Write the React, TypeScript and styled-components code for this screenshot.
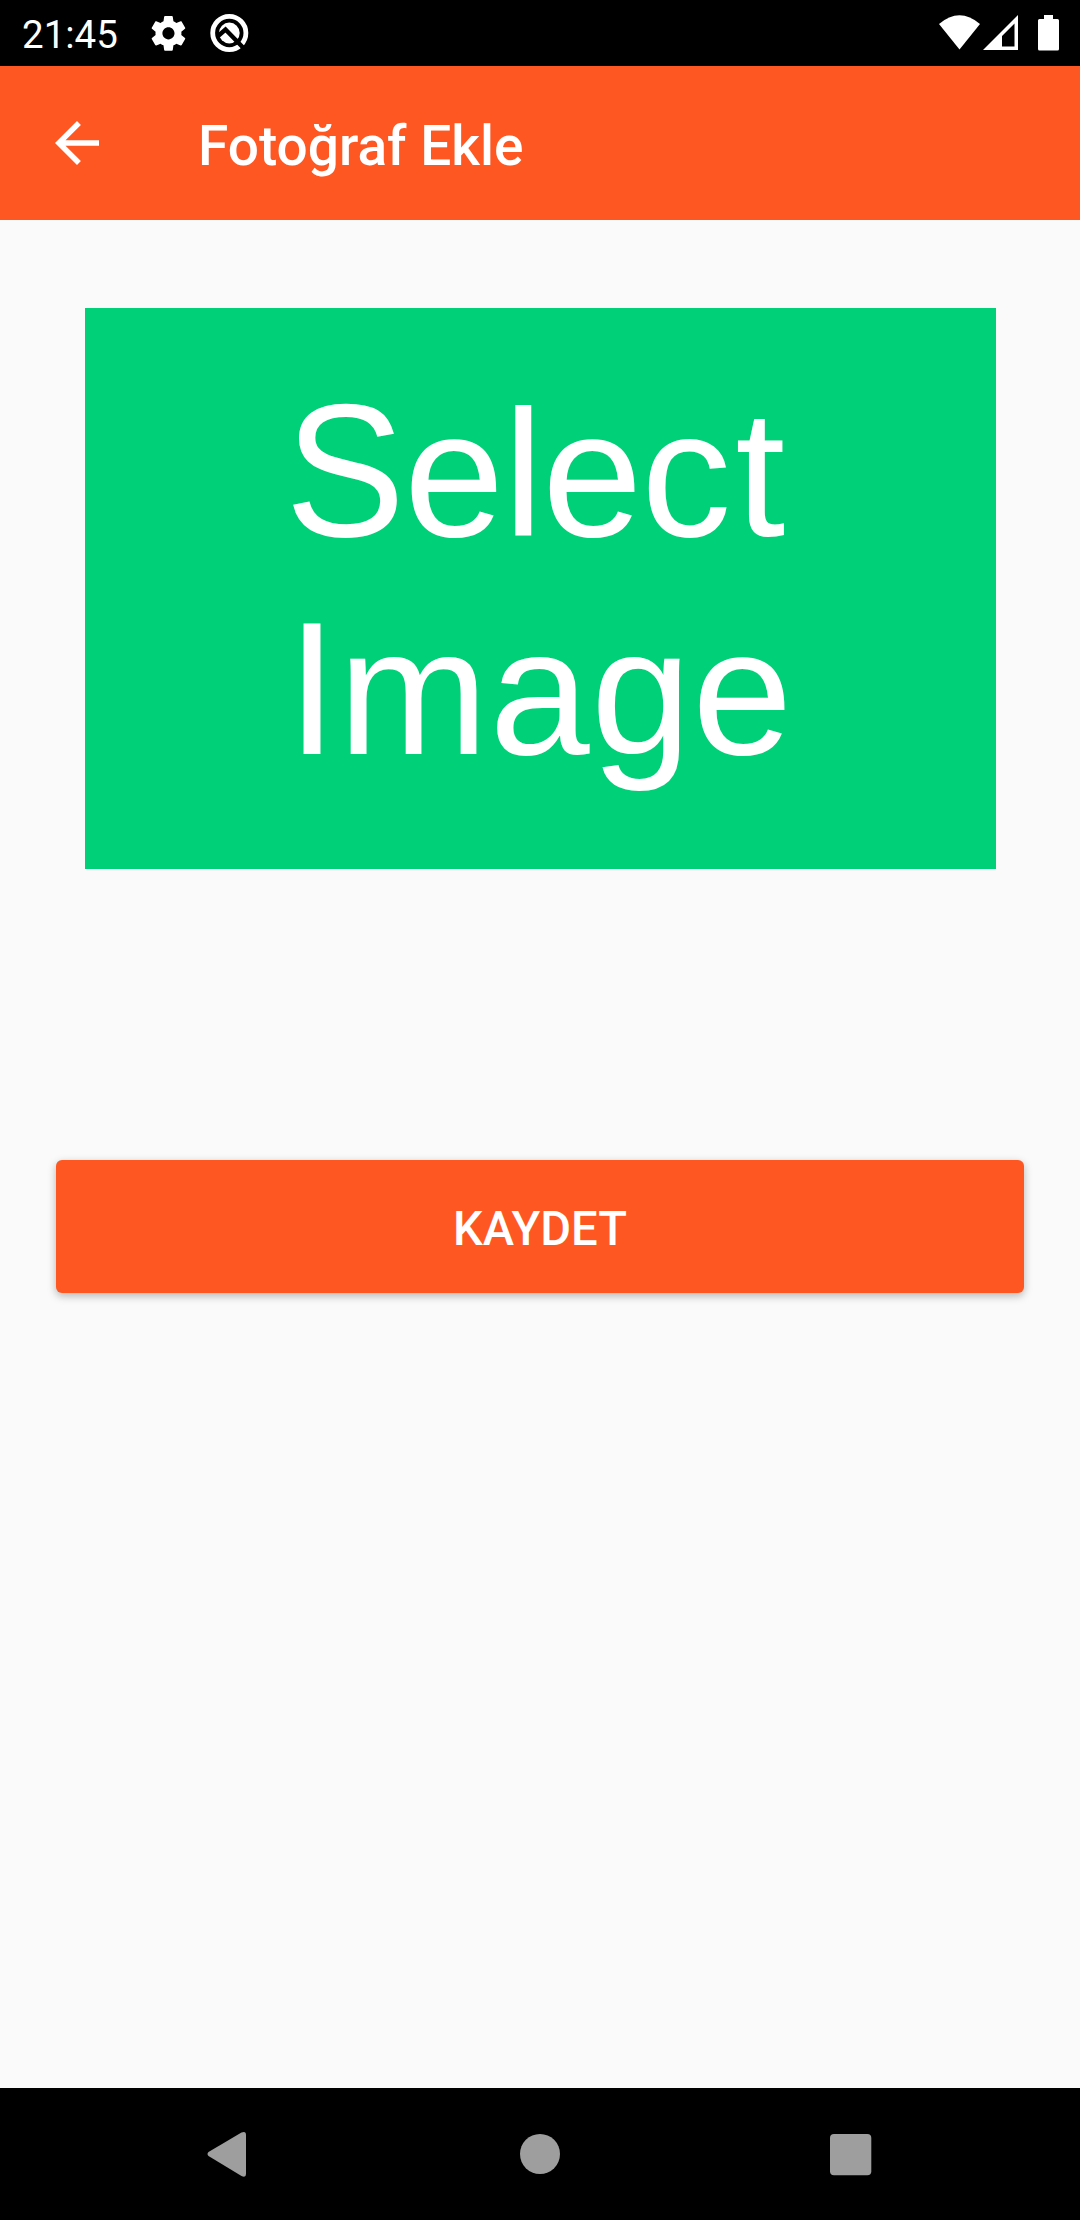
import React from "react";
import styled, { createGlobalStyle } from "styled-components";

const Global = createGlobalStyle`
  body { margin: 0; background: #fafafa; }
  * { box-sizing: border-box; }
`;

const Screen = styled.div`
  display: flex;
  flex-direction: column;
  width: 1080px;
  height: 2220px;
  background: #fafafa;
  font-family: Roboto, "Noto Sans", sans-serif;
  overflow: hidden;
`;

const StatusBar = styled.header`
  display: flex;
  align-items: center;
  justify-content: space-between;
  flex: none;
  height: 66px;
  padding: 0 20px 0 22px;
  background: #000;
  color: #fff;
`;

const StatusGroup = styled.div`
  display: flex;
  align-items: center;
  height: 66px;
`;

const Clock = styled.span`
  width: 126px;
  font-size: 38.5px;
  line-height: 46px;
  padding-top: 4px;
`;

const Toolbar = styled.div`
  display: flex;
  align-items: center;
  flex: none;
  height: 154px;
  padding-left: 44px;
  background: #ff5722;
  color: #fff;
`;

const BackButton = styled.button`
  display: flex;
  width: 66px;
  height: 66px;
  padding: 0;
  border: 0;
  background: none;
  color: inherit;
`;

const Title = styled.h1`
  margin: 0 0 0 88px;
  padding-top: 6px;
  font-size: 55px;
  font-weight: 500;
  line-height: 64px;
`;

const Content = styled.main`
  display: flex;
  flex-direction: column;
  flex: 1;
  padding: 88px 56px 0;
`;

const ImagePicker = styled.div`
  display: flex;
  flex-direction: column;
  width: 911px;
  height: 561px;
  margin-left: 29px;
  padding-top: 57px;
  background: #00d077;
  color: #fff;
  font-family: "Liberation Sans", Arial, sans-serif;
  font-size: 180px;
  line-height: 218px;
`;

const PickerLine = styled.div<{ $indent: number; $tracking: number }>`
  padding-left: ${(p) => p.$indent}px;
  letter-spacing: ${(p) => p.$tracking}px;
  white-space: nowrap;
`;

const Capital = styled.span`
  display: inline-block;
  transform: scaleY(1.05);
  transform-origin: 50% 172px;
`;

const Loose = styled.span`
  letter-spacing: 4px;
`;

const SaveButton = styled.button`
  height: 133px;
  margin-top: 291px;
  padding: 4px 0 0;
  border: 0;
  border-radius: 6px;
  background: #ff5722;
  color: #fff;
  font-family: inherit;
  font-size: 47.2px;
  font-weight: 500;
  box-shadow: 0 3px 8px rgba(0, 0, 0, 0.28);
`;

const NavBar = styled.nav`
  display: grid;
  grid-template-columns: 311px 311px 311px;
  justify-content: center;
  align-items: center;
  justify-items: center;
  flex: none;
  height: 132px;
  background: #000;
`;

const Glyph = styled.svg<{ $w: number; $h: number; $gap?: number }>`
  display: block;
  flex: none;
  width: ${(p) => p.$w}px;
  height: ${(p) => p.$h}px;
  margin-left: ${(p) => p.$gap ?? 0}px;
`;

export default function App() {
  return (
    <Screen>
      <Global />
      <StatusBar>
        <StatusGroup>
          <Clock>21:45</Clock>
          <Glyph $w={42} $h={66} viewBox="0 0 42 66" fill="#fff">
            <path
              transform="translate(-0.3 12.6) scale(1.73)"
              d="M19.43 12.98c.04-.32.07-.64.07-.98s-.03-.66-.07-.98l2.11-1.65c.19-.15.24-.42.12-.64l-2-3.46c-.12-.22-.39-.3-.61-.22l-2.49 1c-.52-.4-1.08-.73-1.69-.98l-.38-2.65C14.46 2.18 14.25 2 14 2h-4c-.25 0-.46.18-.49.42l-.38 2.65c-.61.25-1.17.59-1.69.98l-2.49-1c-.23-.09-.49 0-.61.22l-2 3.46c-.13.22-.07.49.12.64l2.11 1.65c-.04.32-.07.65-.07.98s.03.66.07.98l-2.11 1.65c-.19.15-.24.42-.12.64l2 3.46c.12.22.39.3.61.22l2.49-1c.52.4 1.08.73 1.69.98l.38 2.65c.03.24.24.42.49.42h4c.25 0 .46-.18.49-.42l.38-2.65c.61-.25 1.17-.59 1.69-.98l2.49 1c.23.09.49 0 .61-.22l2-3.46c.12-.22.07-.49-.12-.64l-2.11-1.65zM12 15.5c-1.93 0-3.5-1.57-3.5-3.5s1.57-3.5 3.5-3.5 3.5 1.57 3.5 3.5-1.57 3.5-3.5 3.5z"
            />
          </Glyph>
          <Glyph $w={40} $h={66} $gap={19} viewBox="209 0 40 66">
            <circle cx="229.3" cy="33" r="16.6" fill="none" stroke="#fff" strokeWidth="4.8" />
            <circle cx="229.3" cy="33" r="10.4" fill="#fff" />
            <path d="M217.500 36.500L225.500 29.500L243 47.500" fill="none" stroke="#000" strokeWidth="4.400" />
          </Glyph>
        </StatusGroup>
        <StatusGroup>
          <Glyph $w={42} $h={66} viewBox="938 0 42 66" fill="#fff">
            <path d="M938 24Q958.500 6.500 979 24L958.500 49.500Z" />
          </Glyph>
          <Glyph $w={36} $h={66} $gap={2} viewBox="982 0 36 66" fill="#fff">
            <path fillRule="evenodd" d="M982 50L1017 15V50ZM1001 36V46.500H1013.500V23.500Z" />
          </Glyph>
          <Glyph $w={22} $h={66} $gap={19} viewBox="1037 0 22 66" fill="#fff">
            <path d="M1043 15H1052V19H1056.500Q1058 19 1058 20.500V49Q1058 50.500 1056.500 50.500H1038.500Q1037 50.500 1037 49V20.500Q1037 19 1038.500 19H1043Z" />
          </Glyph>
        </StatusGroup>
      </StatusBar>
      <Toolbar>
        <BackButton aria-label="Geri">
          <Glyph $w={66} $h={66} viewBox="0 0 24 24" fill="#fff">
            <path d="M20 11H7.830l5.590-5.590L12 4l-8 8 8 8 1.410-1.410L7.830 13H20v-2z" />
          </Glyph>
        </BackButton>
        <Title>Fotoğraf Ekle</Title>
      </Toolbar>
      <Content>
        <ImagePicker>
          <PickerLine $indent={200} $tracking={-1}>
            <Capital>S</Capital>ele<Loose>c</Loose>t
          </PickerLine>
          <PickerLine $indent={202} $tracking={1.3}>
            <Capital>I</Capital>mage
          </PickerLine>
        </ImagePicker>
        <SaveButton>KAYDET</SaveButton>
      </Content>
      <NavBar>
        <Glyph $w={44} $h={132} viewBox="206 0 44 132" fill="#9e9e9e">
          <path d="M207.500 64L240.500 44.500Q245 42.500 245 47V86Q245 90 240.500 88L207.500 68Q205.500 66 207.500 64Z" />
        </Glyph>
        <Glyph $w={40} $h={132} viewBox="0 0 40 132" fill="#9e9e9e">
          <circle cx="20" cy="66" r="20" />
        </Glyph>
        <Glyph $w={42} $h={132} viewBox="0 0 42 132" fill="#9e9e9e">
          <rect x="0" y="46" width="41.300" height="41.300" rx="4" />
        </Glyph>
      </NavBar>
    </Screen>
  );
}
